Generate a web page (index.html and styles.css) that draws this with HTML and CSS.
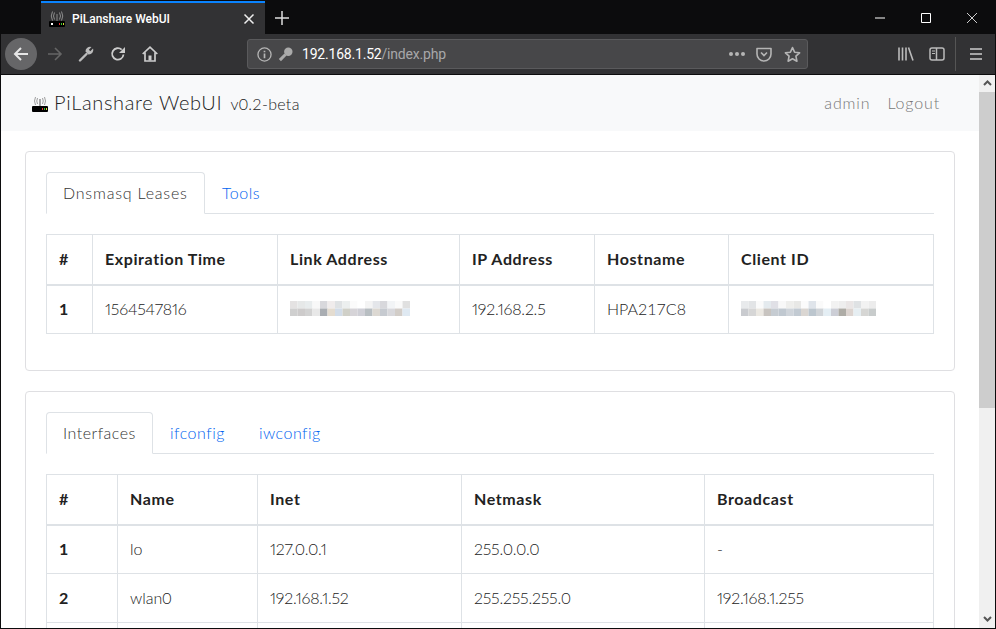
FILE: index.html
```html
<!DOCTYPE html>
<html lang="en">

<head>
    <meta charset="UTF-8">
    <title>PiLanshare WebUI</title>
    <link rel="stylesheet" href="styles.css">
</head>

<body>

    <div class="window">

        <!-- Tab strip -->
        <div class="tabstrip">
            <div class="browser-tab">
                <svg class="favicon" width="16" height="16" viewBox="0 0 16 16">
                    <rect x="7.5" y="3" width="1" height="8" fill="#888"/>
                    <path d="M5.5 1.5Q3.5 5 5.5 8.5M3.5 .5Q1 5 3.5 9.5M10.5 1.5Q12.5 5 10.5 8.5M12.5 .5Q15 5 12.5 9.5" fill="none" stroke="#999" stroke-width=".9"/>
                    <rect x="0" y="10" width="16" height="6" rx="1" fill="#000"/>
                    <rect x="2" y="12" width="2" height="2" fill="#fff"/>
                    <rect x="10" y="12" width="1" height="2" fill="#e33"/>
                    <rect x="12" y="12" width="1" height="2" fill="#3c3"/>
                    <rect x="14" y="12" width="1" height="2" fill="#dd3"/>
                </svg>
                <span class="browser-tab-title">PiLanshare WebUI</span>
                <svg class="tab-close" width="12" height="12" viewBox="0 0 12 12"><path d="M1.5 1.5l9 9M10.500 1.500l-9 9" stroke="#eee" stroke-width="1.500"/></svg>
            </div>
            <svg class="new-tab" width="14" height="14" viewBox="0 0 14 14"><path d="M7 0v14M0 7h14" stroke="#ddd" stroke-width="1.500"/></svg>
            <div class="window-buttons">
                <svg width="10" height="10" viewBox="0 0 10 10"><path d="M0 5h10" stroke="#fff"/></svg>
                <svg width="10" height="10" viewBox="0 0 10 10"><path d="M.5.5h9v9h-9z" fill="none" stroke="#fff"/></svg>
                <svg width="10" height="10" viewBox="0 0 10 10"><path d="M0 0l10 10M10 0L0 10" stroke="#fff" stroke-width=".8"/></svg>
            </div>
        </div>

        <!-- Toolbar -->
        <div class="toolbar">
            <div class="back-btn">
                <svg width="16" height="16" viewBox="0 0 16 16"><path d="M15 8H2M8 2L2 8l6 6" fill="none" stroke="#e6e6e6" stroke-width="2"/></svg>
            </div>
            <svg class="tool forward" width="16" height="16" viewBox="0 0 16 16"><path d="M1 8h13M8 2l6 6-6 6" fill="none" stroke="#666" stroke-width="1.600"/></svg>
            <svg class="tool wrench" width="16" height="16" viewBox="0 0 16 16"><path d="M2 14.500L8.500 8" fill="none" stroke="#bbb" stroke-width="2.400" stroke-linecap="round"/><path d="M7.500 5.500a4.500 4.500 0 0 1 6-4.500l-2.700 2.700 1.500 1.500L15 2.500a4.500 4.500 0 0 1-4.500 6z" fill="#bbb"/></svg>
            <svg class="tool reload" width="16" height="16" viewBox="0 0 16 16"><path d="M13.500 8.500A5.700 5.700 0 1 1 11.700 3.700" fill="none" stroke="#ccc" stroke-width="1.800"/><path d="M15 1v6H9z" fill="#ccc"/></svg>
            <svg class="tool home" width="16" height="16" viewBox="0 0 16 16"><path d="M.7 8L8 1.200 15.300 8M3 6.500V15h10V6.500" fill="none" stroke="#ccc" stroke-width="1.700"/><rect x="6.500" y="9.500" width="3" height="5" fill="#ccc"/></svg>

            <div class="urlbar">
                <svg width="15" height="15" viewBox="0 0 16 16"><circle cx="8" cy="8" r="7" fill="none" stroke="#b5b5b5" stroke-width="1.400"/><path d="M8 7v5M8 4v1.600" stroke="#b5b5b5" stroke-width="1.800"/></svg>
                <svg class="url-key" width="15" height="15" viewBox="0 0 16 16"><circle cx="11" cy="5" r="4.500" fill="#aaa"/><path d="M8 8L2 14" stroke="#aaa" stroke-width="3.200"/></svg>
                <span class="url-text"><span class="url-host">192.168.1.52</span>/index.php</span>
                <span class="url-dots"><i></i><i></i><i></i></span>
                <svg class="url-pocket" width="16" height="16" viewBox="0 0 16 16"><path d="M1 2.500h14v5.500a7 7 0 0 1-14 0z" fill="none" stroke="#b5b5b5" stroke-width="1.600" stroke-linejoin="round"/><path d="M5 6.500l3 3 3-3" fill="none" stroke="#b5b5b5" stroke-width="1.600"/></svg>
                <svg class="url-star" width="17" height="17" viewBox="0 0 17 17"><path d="M8.500 1.600l2.100 4.600 5 .6-3.700 3.400 1 5-4.400-2.500-4.400 2.500 1-5L1.400 6.800l5-.6z" fill="none" stroke="#b5b5b5" stroke-width="1.600" stroke-linejoin="round"/></svg>
            </div>

            <svg class="tool library" width="16" height="16" viewBox="0 0 16 16"><path d="M1 1.500v13M4.500 1.500v13M8 1.500v13M10.500 1.500l4.500 13" stroke="#bbb" stroke-width="1.600" fill="none"/></svg>
            <svg class="tool sidebar" width="16" height="16" viewBox="0 0 16 16"><rect x="1" y="2" width="14" height="12" rx="2" fill="none" stroke="#bbb" stroke-width="1.500"/><path d="M7.500 2v12" stroke="#bbb" stroke-width="1.500"/><path d="M3 5h3M3 7.500h3" stroke="#bbb"/></svg>
            <div class="toolbar-sep"></div>
            <svg class="tool menu" width="14" height="14" viewBox="0 0 14 14"><path d="M1 2h12M1 7h12M1 12h12" stroke="#ccc" stroke-width="1.600"/></svg>
        </div>

        <!-- Page + scrollbar -->
        <div class="viewport">
            <div class="page">

                <nav class="navbar">
                    <a class="brand">
                        <svg class="brand-icon" width="16" height="16" viewBox="0 0 16 16">
                            <rect x="7.500" y="3" width="1" height="8" fill="#555"/>
                            <path d="M5.500 2Q4 5 5.500 8M3.500 1Q1.500 5 3.500 9M10.500 2Q12 5 10.500 8M12.500 1Q14.500 5 12.500 9" fill="none" stroke="#888" stroke-width=".8"/>
                            <rect x="0" y="10" width="16" height="6" rx="1" fill="#000"/>
                            <rect x="10" y="12" width="1" height="2" fill="#e33"/>
                            <rect x="12" y="12" width="1" height="2" fill="#3c3"/>
                            <rect x="14" y="12" width="1" height="2" fill="#dd3"/>
                        </svg>
                        <span class="brand-name">PiLanshare WebUI</span>
                        <small>v0.2-beta</small>
                    </a>
                    <div class="nav-links">
                        <a>admin</a>
                        <a>Logout</a>
                    </div>
                </nav>

                <main class="content">

                    <!-- Leases -->
                    <section class="card">
                        <ul class="tabs">
                            <li class="tab active tab-leases">Dnsmasq Leases</li>
                            <li class="tab">Tools</li>
                        </ul>
                        <table class="data-table leases">
                            <thead>
                                <tr>
                                    <th class="c-num">#</th>
                                    <th class="c-exp">Expiration Time</th>
                                    <th class="c-link">Link Address</th>
                                    <th class="c-ip">IP Address</th>
                                    <th class="c-host">Hostname</th>
                                    <th>Client ID</th>
                                </tr>
                            </thead>
                            <tbody>
                                <tr>
                                    <th>1</th>
                                    <td class="num">1564547816</td>
                                    <td>
                                        <svg class="mosaic" width="120" height="15" viewBox="0 0 16 2" preserveAspectRatio="none">
                                            <path d="M0 0h1v1H0z" fill="#e4e2e2"/><path d="M1 0h1v1H1z" fill="#e6e8e8"/><path d="M2 0h1v1H2z" fill="#e8eced"/><path d="M3 0h1v1H3z" fill="#f8f8f8"/><path d="M4 0h1v1H4z" fill="#d8d8dc"/><path d="M5 0h1v1H5z" fill="#f0ecec"/><path d="M6 0h1v1H6z" fill="#dfe2e4"/><path d="M7 0h1v1H7z" fill="#ecefef"/><path d="M8 0h1v1H8z" fill="#fbfbfb"/><path d="M9 0h1v1H9z" fill="#fff"/><path d="M10 0h1v1h-1z" fill="#f4f4f4"/><path d="M11 0h1v1h-1z" fill="#e4e6ea"/><path d="M12 0h1v1h-1z" fill="#d8d8dc"/><path d="M13 0h1v1h-1z" fill="#f2f4f6"/><path d="M14 0h1v1h-1z" fill="#fafafa"/><path d="M15 0h1v1h-1z" fill="#e0e0e0"/>
                                            <path d="M0 1h1v1H0z" fill="#cfcfcf"/><path d="M1 1h1v1H1z" fill="#cdcbcb"/><path d="M2 1h1v1H2z" fill="#d2d2d2"/><path d="M3 1h1v1H3z" fill="#e8e8e8"/><path d="M4 1h1v1H4z" fill="#a9adb2"/><path d="M5 1h1v1H5z" fill="#e4dcd0"/><path d="M6 1h1v1H6z" fill="#d2dce8"/><path d="M7 1h1v1H7z" fill="#d0d0c8"/><path d="M8 1h1v1H8z" fill="#d6d4d8"/><path d="M9 1h1v1H9z" fill="#cfcfd6"/><path d="M10 1h1v1h-1z" fill="#b8bec2"/><path d="M11 1h1v1h-1z" fill="#dcd8d2"/><path d="M12 1h1v1h-1z" fill="#c6cad0"/><path d="M13 1h1v1h-1z" fill="#d8d8dc"/><path d="M14 1h1v1h-1z" fill="#d2cdc8"/><path d="M15 1h1v1h-1z" fill="#dfe9f2"/>
                                        </svg>
                                    </td>
                                    <td class="num">192.168.2.5</td>
                                    <td>HPA217C8</td>
                                    <td>
                                        <svg class="mosaic" width="135" height="15" viewBox="0 0 18 2" preserveAspectRatio="none">
                                            <path d="M0 0h1v1H0z" fill="#e8eaec"/><path d="M1 0h1v1H1z" fill="#e2e4e6"/><path d="M2 0h1v1H2z" fill="#fafafa"/><path d="M3 0h1v1H3z" fill="#e4eaee"/><path d="M4 0h1v1H4z" fill="#e0e0e6"/><path d="M5 0h1v1H5z" fill="#f8f8f8"/><path d="M6 0h1v1H6z" fill="#eeeeec"/><path d="M7 0h1v1H7z" fill="#e8e8e6"/><path d="M8 0h1v1H8z" fill="#fbfbfb"/><path d="M9 0h1v1H9z" fill="#dfe4ea"/><path d="M10 0h1v1h-1z" fill="#fafafa"/><path d="M11 0h1v1h-1z" fill="#fff"/><path d="M12 0h1v1h-1z" fill="#f2f2f2"/><path d="M13 0h1v1h-1z" fill="#eeeeee"/><path d="M14 0h1v1h-1z" fill="#eae6e6"/><path d="M15 0h1v1h-1z" fill="#dfe2e4"/><path d="M16 0h1v1h-1z" fill="#f2f2f2"/><path d="M17 0h1v1h-1z" fill="#ececec"/>
                                            <path d="M0 1h1v1H0z" fill="#c9cbcf"/><path d="M1 1h1v1H1z" fill="#d6d6d6"/><path d="M2 1h1v1H2z" fill="#ebe8e2"/><path d="M3 1h1v1H3z" fill="#c8c4c0"/><path d="M4 1h1v1H4z" fill="#c6ccd2"/><path d="M5 1h1v1H5z" fill="#c0c8d0"/><path d="M6 1h1v1H6z" fill="#cfd4da"/><path d="M7 1h1v1H7z" fill="#c2cad2"/><path d="M8 1h1v1H8z" fill="#dad6d2"/><path d="M9 1h1v1H9z" fill="#bcc6ce"/><path d="M10 1h1v1h-1z" fill="#d0d4d8"/><path d="M11 1h1v1h-1z" fill="#e4eef4"/><path d="M12 1h1v1h-1z" fill="#ccced6"/><path d="M13 1h1v1h-1z" fill="#aeaca6"/><path d="M14 1h1v1h-1z" fill="#dcd4d0"/><path d="M15 1h1v1h-1z" fill="#e6eef2"/><path d="M16 1h1v1h-1z" fill="#d6d6d4"/><path d="M17 1h1v1h-1z" fill="#c8cccc"/>
                                        </svg>
                                    </td>
                                </tr>
                            </tbody>
                        </table>
                    </section>

                    <!-- Interfaces -->
                    <section class="card">
                        <ul class="tabs">
                            <li class="tab active tab-interfaces">Interfaces</li>
                            <li class="tab">ifconfig</li>
                            <li class="tab">iwconfig</li>
                        </ul>
                        <table class="data-table interfaces">
                            <thead>
                                <tr>
                                    <th class="c-inum">#</th>
                                    <th class="c-name">Name</th>
                                    <th class="c-inet">Inet</th>
                                    <th class="c-mask">Netmask</th>
                                    <th>Broadcast</th>
                                </tr>
                            </thead>
                            <tbody>
                                <tr>
                                    <th>1</th>
                                    <td>lo</td>
                                    <td class="num">127.0.0.1</td>
                                    <td class="num">255.0.0.0</td>
                                    <td>-</td>
                                </tr>
                                <tr>
                                    <th>2</th>
                                    <td>wlan0</td>
                                    <td class="num">192.168.1.52</td>
                                    <td class="num">255.255.255.0</td>
                                    <td class="num">192.168.1.255</td>
                                </tr>
                                <tr>
                                    <th></th>
                                    <td></td>
                                    <td></td>
                                    <td></td>
                                    <td></td>
                                </tr>
                            </tbody>
                        </table>
                    </section>

                </main>
            </div>

            <!-- Scrollbar -->
            <div class="scrollbar">
                <svg class="scroll-arrow" width="9" height="6" viewBox="0 0 9 6"><path d="M1 5l3.500-3.500L8 5" fill="none" stroke="#555" stroke-width="2"/></svg>
                <div class="scroll-thumb"></div>
                <svg class="scroll-arrow scroll-down" width="9" height="6" viewBox="0 0 9 6"><path d="M1 1l3.500 3.500L8 1" fill="none" stroke="#555" stroke-width="2"/></svg>
            </div>
        </div>
    </div>

</body>

</html>
```

FILE: styles.css
```css
/* Browser frame */
* {
    box-sizing: border-box;
}

html, body {
    margin: 0;
    height: 100%;
    overflow: hidden;
}

body {
    font-family: 'Lato', 'Liberation Sans', sans-serif;
    font-size: 16px;
    color: #444;
    background: #fff;
}

.window {
    display: flex;
    flex-direction: column;
    height: 629px;
    border: 1px solid #0c0c0d;
    background: #0c0c0d;
}

.tabstrip {
    display: flex;
    align-items: center;
    height: 33px;
    flex: none;
    color: #fff;
}

.browser-tab {
    display: flex;
    align-items: center;
    width: 224px;
    height: 33px;
    margin-left: 40px;
    padding: 0 10px 0 8px;
    background: #323234;
    border-top: 2px solid #0a84ff;
    font-family: 'Roboto', sans-serif;
    font-size: 12px;
    font-weight: 500;
}

.browser-tab-title {
    margin-left: 7px;
    flex: 1;
}

.new-tab {
    margin-left: 10px;
}

.window-buttons {
    display: flex;
    gap: 36px;
    margin-left: auto;
    padding-right: 18px;
}

.toolbar {
    display: flex;
    align-items: center;
    height: 41px;
    flex: none;
    background: #323234;
    border-bottom: 1px solid #0c0c0d;
    padding-left: 4px;
}

.back-btn {
    display: flex;
    align-items: center;
    justify-content: center;
    width: 32px;
    height: 32px;
    border-radius: 50%;
    background: #666668;
}

.forward { margin-left: 10px; }
.wrench { margin-left: 15px; }
.reload { margin-left: 16px; }
.home { margin-left: 16px; }

.urlbar {
    display: flex;
    align-items: center;
    width: 561px;
    height: 30px;
    margin-left: 89px;
    padding: 0 6px 0 9px;
    background: #474749;
    border: 1px solid #5a5a5c;
    border-radius: 3px;
}

.url-key {
    margin-left: 6px;
}

.url-text {
    margin-left: 9px;
    flex: 1;
    color: #a8a8aa;
    font-family: 'Roboto', sans-serif;
    font-size: 14px;
    letter-spacing: -.2px;
}

.url-host {
    color: #fff;
}

.url-dots {
    display: flex;
    gap: 2px;
}

.url-dots i {
    width: 4px;
    height: 4px;
    border-radius: 50%;
    background: #b5b5b5;
}

.url-pocket { margin-left: 11px; }
.url-star { margin-left: 12px; }

.library { margin-left: 90px; }
.sidebar { margin-left: 15px; }

.toolbar-sep {
    width: 1px;
    height: 34px;
    margin-left: 10px;
    background: #555;
}

.menu { margin-left: 13px; }

/* Page area */
.viewport {
    display: flex;
    flex: 1;
    min-height: 0;
    background: #fff;
}

.page {
    flex: 1;
    min-width: 0;
    overflow: hidden;
}

.scrollbar {
    display: flex;
    flex-direction: column;
    align-items: center;
    width: 16px;
    flex: none;
    background: #f0f0f0;
}

.scroll-arrow {
    margin: 5px 0 6px;
}

.scroll-thumb {
    width: 16px;
    height: 316px;
    background: #cdcdcd;
}

.scroll-down {
    margin: auto 0 6px;
}

.navbar {
    display: flex;
    align-items: center;
    justify-content: space-between;
    height: 56px;
    padding: 0 39px 2px 31px;
    background: #f8f9fa;
}

.brand {
    font-size: 20px;
    font-weight: 300;
    letter-spacing: .65px;
    color: #222;
}

.brand small {
    font-size: 16px;
    margin-left: 2px;
    letter-spacing: .3px;
}

.brand-icon {
    vertical-align: -2px;
}

.nav-links {
    display: flex;
    gap: 17px;
    color: #777;
    font-weight: 300;
    letter-spacing: .85px;
}

.content {
    padding: 20px 24px;
}

.card {
    padding: 20px;
    margin-bottom: 20px;
    height: 220px;
    border: 1px solid #dfdfe2;
    border-radius: 4px;
    background: #fff;
}

.card + .card {
    height: auto;
}

/* Tabs */
.tabs {
    display: flex;
    margin: 0 0 20px;
    padding: 0;
    list-style: none;
    border-bottom: 1px solid #dee2e6;
    height: 42px;
    letter-spacing: .5px;
    font-weight: 300;
}

.tab {
    height: 42px;
    padding: 0 17px;
    line-height: 42px;
    color: #0064f0;
}

.tab.active {
    color: #333;
    background: #fff;
    border: 1px solid #dee2e6;
    border-bottom-color: #fff;
    border-radius: 4px 4px 0 0;
    padding: 0 16px;
    line-height: 39px;
}

.tab-leases { width: 159px; letter-spacing: .8px; }
.tab-interfaces { width: 107px; }

/* Tables */
.data-table {
    width: 888px;
    table-layout: fixed;
    border-collapse: collapse;
}

.data-table th,
.data-table td {
    height: 49px;
    padding: 0 12px 2px;
    border: 1px solid #dee2e6;
    text-align: left;
    vertical-align: middle;
}

.data-table th {
    color: #222;
    font-weight: 700;
    letter-spacing: .6px;
}

.data-table thead th {
    height: 50px;
    border-bottom-width: 2px;
}

.data-table td {
    font-weight: 300;
    color: #222;
}

.data-table td.num {
    font-variant-numeric: proportional-nums;
    letter-spacing: -.2px;
}

.c-num { width: 46px; }
.c-exp { width: 185px; }
.c-link { width: 182px; }
.c-ip { width: 135px; }
.c-host { width: 134px; }

.c-inum { width: 71px; }
.c-name { width: 140px; }
.c-inet { width: 204px; }
.c-mask { width: 243px; }

.mosaic {
    display: block;
}
```
